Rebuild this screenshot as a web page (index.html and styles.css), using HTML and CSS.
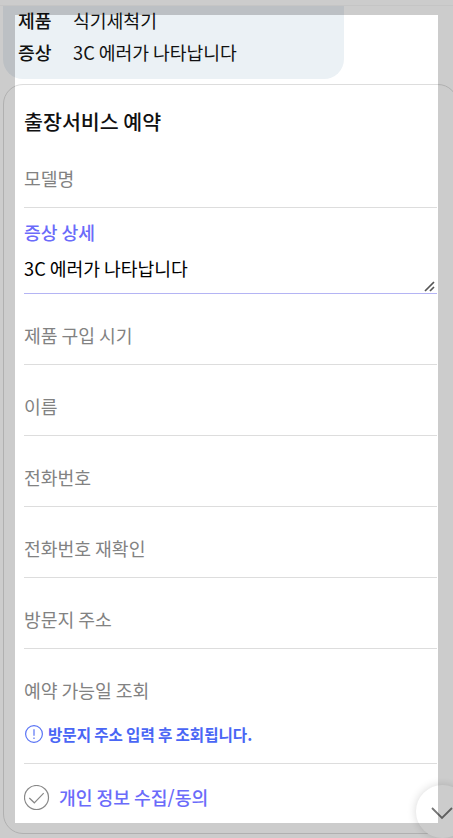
FILE: index.html
```html
<!DOCTYPE html>
<html lang="ko">
<head>
    <meta charset="UTF-8">
    <meta name="viewport" content="width=device-width, initial-scale=1.0">
    <title>출장서비스 예약</title>
    <link rel="stylesheet" href="styles.css">
</head>
<body>
    <div class="chat">
        <div class="bubble">
            <div class="bubble-row"><b>제품</b><span>식기세척기</span></div>
            <div class="bubble-row"><b>증상</b><span>3C 에러가 나타납니다</span></div>
        </div>

        <form class="card">
            <h2>출장서비스 예약</h2>
            <div class="field"><input type="text" placeholder="모델명"></div>
            <div class="field detail">
                <label for="symptom">증상 상세</label>
                <textarea id="symptom" rows="1">3C 에러가 나타납니다</textarea>
                <svg class="grip" width="12" height="12" viewBox="0 0 12 12">
                    <path d="M1 10L10 1M6 10L10 6"/>
                </svg>
            </div>
            <div class="field"><input type="text" placeholder="제품 구입 시기"></div>
            <div class="field"><input type="text" placeholder="이름"></div>
            <div class="field"><input type="tel" placeholder="전화번호"></div>
            <div class="field"><input type="tel" placeholder="전화번호 재확인"></div>
            <div class="field"><input type="text" placeholder="방문지 주소"></div>
            <div class="field date">
                <input type="text" placeholder="예약 가능일 조회">
                <p class="notice">
                    <svg width="18" height="18" viewBox="0 0 18 18">
                        <circle cx="9" cy="9" r="8.4"/>
                        <path d="M9 4.2V10.8M9 12.4V14"/>
                    </svg>
                    <span>방문지 주소 입력 후 조회됩니다.</span>
                </p>
            </div>
            <div class="agree">
                <svg width="26" height="26" viewBox="0 0 26 26">
                    <circle cx="12.5" cy="12.5" r="12"/>
                    <path d="M5.3 13L10.3 17.8L19.7 8.2"/>
                </svg>
                <span>개인 정보 수집/동의</span>
            </div>
        </form>
    </div>

    <button class="scroll-down" type="button">
        <svg width="24" height="14" viewBox="0 0 24 14">
            <path d="M2 2L12 12L22 2"/>
        </svg>
    </button>
    <div class="frame"></div>
</body>
</html>
```

FILE: styles.css
```css
* {
    box-sizing: border-box;
}

body {
    margin: 0;
    height: 838px;
    overflow: hidden;
    background: #fff;
    color: #111;
    font-family: "Noto Sans CJK KR", "Noto Sans", sans-serif;
    font-size: 18.25px;
    line-height: 26px;
    word-spacing: -1.2px;
}

.chat {
    width: 458px;
    padding-left: 3px;
    border-top: 1px solid #f7f7f7;
    margin-top: 5px;
}

.bubble {
    width: 341px;
    height: 73px;
    padding: 1px 15px 0;
    background: #ebf1f5;
    border-radius: 0 0 20px 20px;
}

.bubble-row {
    display: flex;
    height: 32px;
}

.bubble-row b {
    width: 55px;
    font-weight: 500;
}

.card {
    height: 750px;
    margin-top: 5px;
    padding: 0 20px;
    border: 1px solid #ddd;
    border-radius: 20px;
}

h2 {
    height: 52px;
    margin: 0;
    padding-top: 22px;
    font-size: 20.6px;
    line-height: 28px;
    font-weight: 500;
}

.field {
    height: 71px;
    padding-top: 28px;
    border-bottom: 1px solid #ddd;
}

input,
textarea {
    display: block;
    width: 100%;
    height: 26px;
    padding: 0;
    border: 0;
    outline: 0;
    background: none;
    color: #000;
    font: inherit;
    word-spacing: inherit;
    overflow: hidden;
    resize: none;
}

input::placeholder {
    color: #828282;
    opacity: 1;
}

.detail {
    position: relative;
    height: 86px;
    padding-top: 11px;
    border-color: #b4b4f4;
}

.detail label {
    display: block;
    height: 36px;
    color: #6b6bfa;
    font-weight: 500;
}

.grip {
    position: absolute;
    right: 1px;
    bottom: 0;
    fill: none;
    stroke: #555;
    stroke-width: 1.7;
}

.date {
    height: 115px;
}

.notice {
    display: flex;
    align-items: center;
    gap: 5px;
    margin: 18px 0 0 1px;
    color: #4a66f5;
    font-size: 15.6px;
    font-weight: 700;
    word-spacing: -1.2px;
}

.notice svg,
.agree svg {
    fill: none;
    stroke: #5a74f5;
    stroke-width: 1.2;
}

.agree {
    display: flex;
    align-items: center;
    gap: 9px;
    height: 67px;
    color: #6b6bfa;
    font-weight: 500;
}

.agree span {
    padding-bottom: 1px;
}

.agree svg {
    stroke: #888;
}

.scroll-down {
    position: fixed;
    top: 785px;
    left: 416px;
    width: 53px;
    height: 53px;
    padding: 5px 2px 0 0;
    border: 0;
    border-radius: 50%;
    background: #fff;
    box-shadow: 0 0 10px rgba(0, 0, 0, 0.16);
    text-align: center;
}

.scroll-down svg {
    fill: none;
    stroke: #777;
    stroke-width: 1.8;
}

/* dimmed edge around the window */
.frame {
    position: fixed;
    inset: 0;
    border: 15px solid rgba(0, 0, 0, 0.2);
    pointer-events: none;
}
```
